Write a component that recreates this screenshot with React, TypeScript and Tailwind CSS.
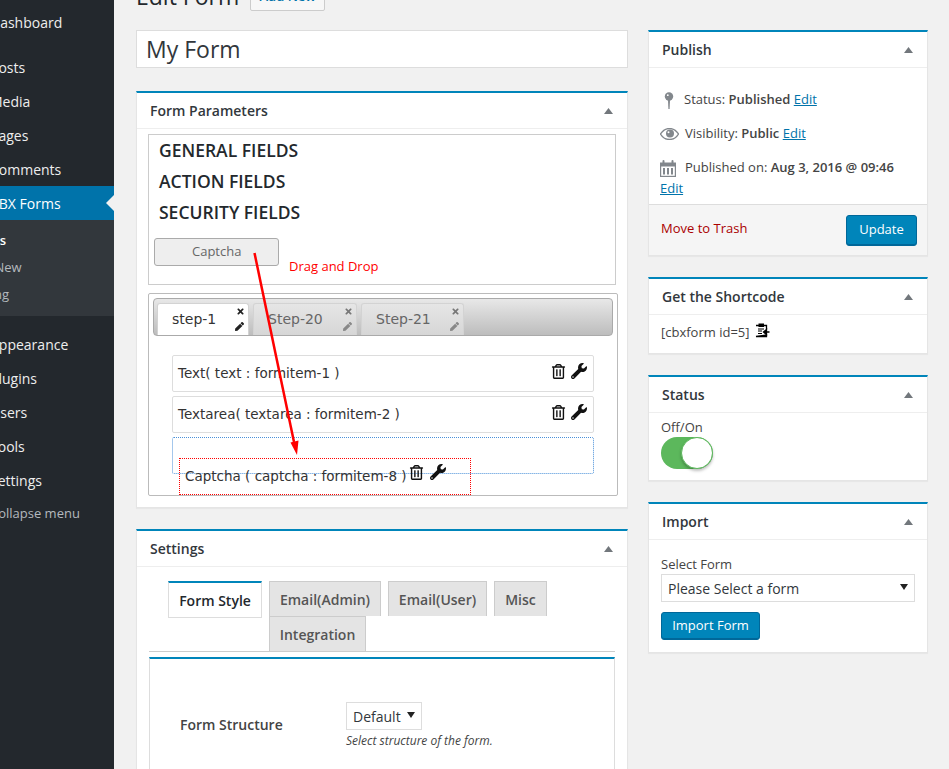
import { FaRegTrashAlt, FaWrench, FaTimes, FaPen } from 'react-icons/fa';

const mainMenu = ['Posts', 'Media', 'Pages', 'Comments'];
const lowerMenu = ['Appearance', 'Plugins', 'Users', 'Tools', 'Settings', 'Collapse menu'];

function Caret() {
  return (
    <svg width="9" height="6" viewBox="0 0 9 6" className="shrink-0">
      <path d="M4.5 0L9 6H0z" fill="#72777c" />
    </svg>
  );
}

function BoxHeader({ title }: { title: string }) {
  return (
    <div className="flex h-[36px] items-center justify-between border-b border-[#eee] pl-[13px] pr-[14px] text-[14px] font-semibold text-[#32373c]">
      <span>{title}</span>
      <Caret />
    </div>
  );
}

function Box({ title, className, children }: { title: string; className?: string; children: React.ReactNode }) {
  return (
    <div className={`border border-t-2 border-[#e5e5e5] border-t-[#0085ba] bg-white shadow-[0_1px_1px_rgba(0,0,0,0.04)] ${className ?? ''}`}>
      <BoxHeader title={title} />
      {children}
    </div>
  );
}

function ItemTools({ className }: { className?: string }) {
  return (
    <div className={`flex items-center gap-[5px] text-[#111] ${className ?? ''}`}>
      <FaRegTrashAlt size={15} />
      <FaWrench size={16} />
    </div>
  );
}

function StepTab({ label, active, width }: { label: string; active?: boolean; width: string }) {
  return (
    <div
      className={`relative h-[32px] rounded-t-[3px] border border-b-0 border-[#d3d3d3] pl-[14px] pt-[5px] text-[14px] font-['DejaVu_Sans',sans-serif] ${width} ${
        active ? 'bg-white text-[#333]' : 'bg-gradient-to-b from-[#e6e6e6] to-[#d6d6d6] text-[#666]'
      }`}
    >
      {label}
      <FaTimes size={9} className={`absolute right-[3px] top-[3px] ${active ? 'text-[#222]' : 'text-[#777]'}`} />
      <FaPen size={9} className={`absolute bottom-[4px] right-[4px] ${active ? 'text-[#222]' : 'text-[#888]'}`} />
    </div>
  );
}

function FormItem({ label }: { label: string }) {
  return (
    <div className="mb-[4px] flex h-[37px] items-start justify-between rounded-[2px] border border-[#ddd] pl-[5px] pr-[6px] pt-[8px] font-['DejaVu_Sans',sans-serif] text-[13.5px] leading-[18px] text-[#333]">
      <span>{label}</span>
      <ItemTools className="-mt-[1px]" />
    </div>
  );
}

function SettingsTab({ label, width }: { label: string; width: string }) {
  return (
    <div className={`flex h-[35px] items-center justify-center border border-b-0 border-[#ccc] bg-[#e4e4e4] text-[14px] font-semibold text-[#555] ${width}`}>
      {label}
    </div>
  );
}

function PinIcon() {
  return (
    <svg width="10" height="17" viewBox="0 0 10 17">
      <circle cx="5" cy="4.5" r="4.2" fill="#82878c" />
      <path d="M4 8h2l-.4 9h-1.2z" fill="#82878c" />
      <circle cx="3.8" cy="3.2" r="0.9" fill="#fff" />
    </svg>
  );
}

function EyeIcon() {
  return (
    <svg width="19" height="12" viewBox="0 0 19 12">
      <path d="M0.5 6C3 2 6 0.5 9.5 0.5S16 2 18.500 6C16 10 13 11.500 9.500 11.500S3 10 0.500 6z" fill="none" stroke="#82878c" strokeWidth="1.300" />
      <circle cx="10" cy="5.500" r="4" fill="#82878c" />
      <circle cx="8.500" cy="4.200" r="1" fill="#fff" />
    </svg>
  );
}

function CalendarIcon() {
  return (
    <svg width="16" height="17" viewBox="0 0 16 17">
      <path d="M0 2.500h16V17H0z" fill="#82878c" />
      <rect x="1.200" y="6.500" width="13.600" height="9.300" fill="#fff" />
      <rect x="3" y="8" width="2" height="6.500" fill="#82878c" />
      <rect x="7" y="8" width="2" height="6.500" fill="#82878c" />
      <rect x="11" y="8" width="2" height="6.500" fill="#82878c" />
      <rect x="2.500" y="0" width="2" height="4" rx="1" fill="#82878c" />
      <rect x="11.500" y="0" width="2" height="4" rx="1" fill="#82878c" />
    </svg>
  );
}

function ClipboardIcon() {
  return (
    <svg width="15" height="15" viewBox="0 0 15 15" className="ml-[5px] -mt-[5px]">
      <path d="M1 2.500h10.500v4M11.500 12v1.500H1z" fill="none" stroke="#000" strokeWidth="1.300" />
      <rect x="3.500" y="0.500" width="5.500" height="3.500" fill="#000" />
      <path d="M3 6h6M3 8h4M3 10.500h4" stroke="#000" strokeWidth="1" />
      <path d="M14.500 9H9.500M11.500 6.500L8.500 9l3 2.500z" fill="#000" stroke="#000" strokeWidth="1.300" />
    </svg>
  );
}

export default function App() {
  return (
    <div className="relative flex h-[769px] overflow-hidden bg-[#f1f1f1] font-['Open_Sans',sans-serif] text-[13px] text-[#444]">
      <aside className="w-[114px] shrink-0 bg-[#23282d] pt-[5px] text-[14px] text-[#eee]">
        <div className="-ml-[10px] flex h-[34px] items-center">Dashboard</div>
        <div className="mt-[11px]">
          {mainMenu.map((m) => (
            <div key={m} className="-ml-[10px] flex h-[34px] items-center">
              {m}
            </div>
          ))}
        </div>
        <div className="relative flex h-[34px] items-center bg-[#0073aa] text-white">
          <span className="-ml-[10px]">CBX Forms</span>
          <div className="absolute right-0 top-[9px] h-0 w-0 border-y-[8px] border-r-[8px] border-y-transparent border-r-[#f1f1f1]" />
        </div>
        <div className="h-[96px] bg-[#32373c] pt-[7px] text-[13px] text-[#b4b9be]">
          <div className="-ml-[33px] flex h-[27px] items-center font-semibold text-white">Forms</div>
          <div className="-ml-[33px] flex h-[27px] items-center">Add New</div>
          <div className="-ml-[33px] flex h-[27px] items-center">Setting</div>
        </div>
        <div className="mt-[11px]">
          {lowerMenu.map((m) => (
            <div key={m} className={`-ml-[10px] flex h-[34px] items-center ${m === 'Collapse menu' ? 'text-[13px] text-[#b4b9be]' : ''}`}>
              {m}
            </div>
          ))}
        </div>
      </aside>

      <main className="flex-1 pl-[22px] pr-[21px]">
        <div className="-mt-[19px] flex h-[30px] items-center">
          <h1 className="text-[23px] font-normal text-[#23282d]">Edit Form</h1>
          <div className="ml-[11px] mt-[1px] flex h-[28px] w-[75px] items-center justify-center rounded-[2px] border border-[#ccc] bg-[#f7f7f7] text-[13px] font-semibold text-[#0073aa]">
            Add New
          </div>
        </div>

        <div className="mt-[19px] flex gap-[20px]">
          <div className="w-[492px]">
            <div className="flex h-[38px] items-center border border-[#ddd] bg-white pl-[9px] text-[23px] text-[#32373c]">My Form</div>

            <Box title="Form Parameters" className="mt-[23px] h-[417px]">
              <div className="px-[11px] pt-[5px]">
                <div className="h-[151px] w-[468px] border border-[#ccc] pl-[5px]">
                  <div className="pl-[5px] text-[17.500px] font-semibold leading-[31px] text-[#23282d]">
                    <div>GENERAL FIELDS</div>
                    <div>ACTION FIELDS</div>
                    <div>SECURITY FIELDS</div>
                  </div>
                  <div className="mt-[10px] flex items-start">
                    <div className="flex h-[28px] w-[125px] items-center rounded-[3px] border border-[#aaa] bg-[#eee] pl-[37px] text-[#666]">Captcha</div>
                    <span className="ml-[10px] mt-[18px] leading-[20px] text-[#f00]">Drag and Drop</span>
                  </div>
                </div>
                <div className="mt-[8px] h-[203px] w-[470px] rounded-[2px] border border-[#bbb] p-[4px]">
                  <div className="flex h-[38px] items-end gap-[4px] rounded-[4px] border border-[#aaa] bg-gradient-to-b from-[#e8e8e8] to-[#bdbdbd] pl-[3px]">
                    <StepTab label="step-1" active width="w-[92px]" />
                    <StepTab label="Step-20" width="w-[104px]" />
                    <StepTab label="Step-21" width="w-[103px]" />
                  </div>
                  <div className="relative mx-[19px] mt-[19px]">
                    <FormItem label="Text( text : formitem-1 )" />
                    <FormItem label="Textarea( textarea : formitem-2 )" />
                    <div className="h-[37px] rounded-[2px] border border-dotted border-[#4a90d9]" />
                    <div className="absolute left-[7px] top-[103px] flex h-[37px] w-[292px] items-start border border-dotted border-[#f00] pl-[5px] pt-[8px] font-['DejaVu_Sans',sans-serif] text-[13.500px] leading-[18px] text-[#333]">
                      <span className="whitespace-nowrap">Captcha ( captcha : formitem-8 )</span>
                      <ItemTools className="-mt-[3px] ml-[2px] gap-[6px]" />
                    </div>
                  </div>
                </div>
              </div>
            </Box>

            <Box title="Settings" className="mt-[21px] h-[300px]">
              <div className="px-[12px] pt-[14px]">
                <div className="flex border-b border-[#ccc] pl-[19px]">
                  <div className="flex h-[37px] w-[94px] items-center justify-center border border-t-2 border-[#ddd] border-t-[#0085ba] bg-white text-[14px] font-semibold text-[#23282d]">
                    Form Style
                  </div>
                  <div className="ml-[7px] flex w-[290px] flex-wrap gap-x-[7px]">
                    <SettingsTab label="Email(Admin)" width="w-[112px]" />
                    <SettingsTab label="Email(User)" width="w-[99px]" />
                    <SettingsTab label="Misc" width="w-[53px]" />
                    <SettingsTab label="Integration" width="w-[97px]" />
                  </div>
                </div>
                <div className="mt-[5px] h-[200px] border border-t-2 border-[#ddd] border-t-[#0085ba] pl-[30px] pt-[43px]">
                  <div className="flex">
                    <div className="w-[166px] pt-[13px] text-[14px] font-semibold leading-[19px] text-[#444]">Form Structure</div>
                    <div>
                      <div className="flex h-[28px] w-[76px] items-center justify-between border border-[#ddd] pl-[6px] pr-[6px] text-[14px] text-[#32373c]">
                        <span>Default</span>
                        <svg width="8" height="6" viewBox="0 0 8 6" className="-mt-[2px]">
                          <path d="M0 0h8L4 6z" fill="#222" />
                        </svg>
                      </div>
                      <div className="mt-[2px] text-[12px] italic leading-[18px] text-[#444]">Select structure of the form.</div>
                    </div>
                  </div>
                </div>
              </div>
            </Box>
          </div>

          <div className="w-[280px]">
            <Box title="Publish" className="">
              <div className="h-[136px] pl-[11px] pt-[22px]">
                <div className="flex h-[20px] items-center">
                  <div className="flex w-[24px] justify-center pr-[10px]"><div className="pl-[3px]"><PinIcon /></div></div>
                  <span>Status: <b className="font-semibold">Published</b> <u className="text-[#0073aa]">Edit</u></span>
                </div>
                <div className="mt-[14px] flex h-[20px] items-center">
                  <div className="w-[25px]"><EyeIcon /></div>
                  <span>Visibility: <b className="font-semibold">Public</b> <u className="text-[#0073aa]">Edit</u></span>
                </div>
                <div className="mt-[14px] flex h-[20px] items-center">
                  <div className="w-[25px]"><CalendarIcon /></div>
                  <span>Published on: <b className="font-semibold">Aug 3, 2016 @ 09:46</b></span>
                </div>
                <u className="block leading-[20px] text-[#0073aa]">Edit</u>
              </div>
              <div className="flex h-[51px] items-center justify-between border-t border-[#ddd] bg-[#f5f5f5] pl-[12px] pr-[10px]">
                <span className="-mt-[2px] text-[#a00]">Move to Trash</span>
                <div className="flex h-[31px] w-[71px] items-center justify-center rounded-[3px] border border-[#006799] bg-[#0085ba] text-[13px] text-white shadow-[inset_0_-1px_0_#006799]">
                  Update
                </div>
              </div>
            </Box>

            <Box title="Get the Shortcode" className="mt-[21px]">
              <div className="flex h-[38px] items-center pl-[12px] pb-[2px]">
                <span>[cbxform id=5]</span>
                <ClipboardIcon />
              </div>
            </Box>

            <Box title="Status" className="mt-[21px]">
              <div className="h-[67px] pl-[12px] pt-[6px]">
                <div className="leading-[17px]">Off/On</div>
                <div className="relative mt-[1px] h-[32px] w-[52px] rounded-full bg-[#5cb85c]">
                  <div className="absolute right-0 top-0 h-[32px] w-[32px] rounded-full border border-[#5cb85c] bg-white shadow-[0_2px_3px_rgba(0,0,0,0.25)]" />
                </div>
              </div>
            </Box>

            <Box title="Import" className="mt-[21px]">
              <div className="h-[112px] pl-[12px] pt-[15px]">
                <div className="leading-[18px]">Select Form</div>
                <div className="mt-[1px] flex h-[28px] w-[254px] items-center justify-between border border-[#ddd] pl-[6px] pr-[6px] text-[14px] text-[#32373c]">
                  <span>Please Select a form</span>
                  <svg width="8" height="6" viewBox="0 0 8 6" className="-mt-[2px]">
                    <path d="M0 0h8L4 6z" fill="#222" />
                  </svg>
                </div>
                <div className="mt-[10px] flex h-[28px] w-[99px] items-center justify-center rounded-[3px] border border-[#006799] bg-[#0085ba] text-white shadow-[inset_0_-1px_0_#006799]">
                  Import Form
                </div>
              </div>
            </Box>
          </div>
        </div>
      </main>

      <svg width="949" height="769" viewBox="0 0 949 769" className="pointer-events-none absolute left-0 top-0">
        <path d="M254.500 253L294 442" stroke="#f00" strokeWidth="2.500" />
        <path d="M297 455L290.500 442.500L298.500 440.500z" fill="#f00" />
      </svg>
    </div>
  );
}
